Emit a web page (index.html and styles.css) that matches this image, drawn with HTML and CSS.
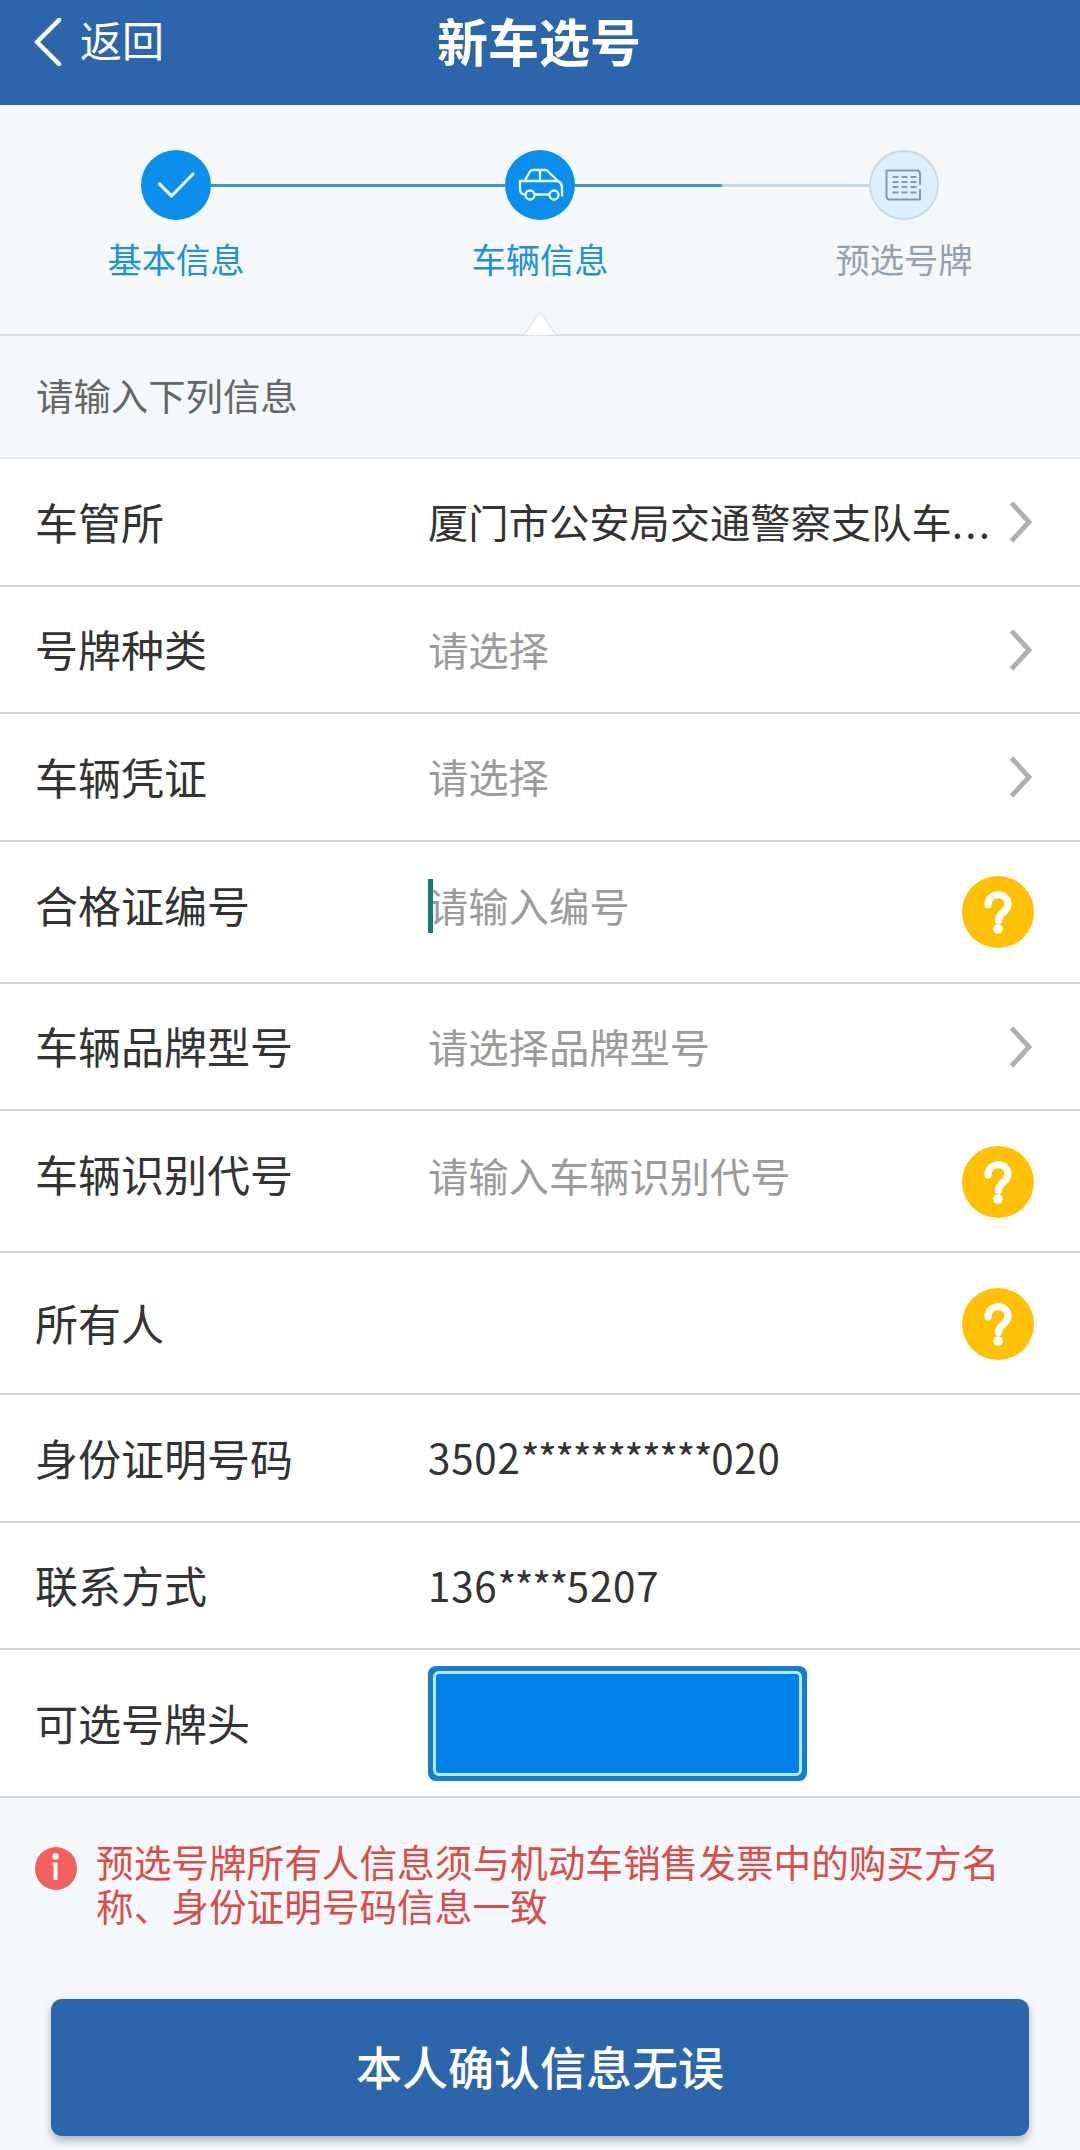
FILE: index.html
```html
<!doctype html>
<html lang="zh-CN">
  <head>
    <meta charset="UTF-8" />
    <meta name="viewport" content="width=device-width, initial-scale=1.0" />
    <title>新车选号</title>
    <link rel="stylesheet" href="styles.css">
  </head>
  <body>
    <header class="topbar">
      <a class="back">
        <svg width="28" height="48" viewBox="0 0 28 48"><path d="M25 2 3 24 25 46" /></svg>
        <span>返回</span>
      </a>
      <h1>新车选号</h1>
      <span></span>
    </header>

    <nav class="steps">
      <div class="step done">
        <div class="track">
          <span class="line none"></span>
          <span class="dot">
            <svg width="70" height="70" viewBox="0 0 70 70"><path d="M18.500 34 30.500 46 52 24" stroke-width="3.200" /></svg>
          </span>
          <span class="line"></span>
        </div>
        <div class="name">基本信息</div>
      </div>
      <div class="step done current">
        <div class="track">
          <span class="line"></span>
          <span class="dot">
            <svg width="70" height="70" viewBox="0 0 70 70" stroke-width="2.300">
              <path d="M19.500 31 25 21.500Q26 20 27.500 20H40Q41.500 20 42.500 21L53 31M35 20V31" />
              <path d="M20.500 45Q15 44 15 39V31H51Q57 31.500 57 38V45.500M30 44.500H44" />
              <circle cx="25" cy="45" r="4.500" />
              <circle cx="49" cy="45" r="4.500" />
            </svg>
          </span>
          <span class="line"></span>
        </div>
        <div class="name">车辆信息</div>
        <svg class="pointer" width="34" height="25" viewBox="0 0 34 25"><path d="M1 24 15 3Q17 1 19 3L33 24" /></svg>
      </div>
      <div class="step">
        <div class="track">
          <span class="line"></span>
          <span class="dot">
            <svg width="66" height="66" viewBox="0 0 66 66" stroke-width="2">
              <path d="M49 32V22Q49 18.500 46 18.500H15.500V44Q15.500 47.500 19 47.500H49V38" />
              <path d="M21.500 25H45.500M21.500 30H45.500M21.500 35H45.500M21.500 40.500H45.500" stroke-dasharray="6 3" stroke-linecap="butt" />
            </svg>
          </span>
          <span class="line none"></span>
        </div>
        <div class="name">预选号牌</div>
      </div>
    </nav>

    <p class="hint">请输入下列信息</p>

    <main class="form">
      <div class="row">
        <label>车管所</label>
        <span class="value">厦门市公安局交通警察支队车<span class="more">...</span></span>
        <svg class="chevron" viewBox="0 0 24 42"><path d="M2.500 2 20 21 2.500 40" /></svg>
      </div>
      <div class="row">
        <label>号牌种类</label>
        <span class="value empty">请选择</span>
        <svg class="chevron" viewBox="0 0 24 42"><path d="M2.500 2 20 21 2.500 40" /></svg>
      </div>
      <div class="row">
        <label>车辆凭证</label>
        <span class="value empty">请选择</span>
        <svg class="chevron" viewBox="0 0 24 42"><path d="M2.500 2 20 21 2.500 40" /></svg>
      </div>
      <div class="row tall top">
        <label>合格证编号</label>
        <span class="value empty focus">请输入编号</span>
        <svg class="help" viewBox="0 0 72 72">
          <circle cx="36" cy="36" r="36" />
          <path d="M26 29C26 15.500 46 15.500 46 28 46 36 36.500 36.500 36.500 44.500" />
          <circle class="point" cx="36" cy="53" r="4.800" />
        </svg>
      </div>
      <div class="row">
        <label>车辆品牌型号</label>
        <span class="value empty">请选择品牌型号</span>
        <svg class="chevron" viewBox="0 0 24 42"><path d="M2.500 2 20 21 2.500 40" /></svg>
      </div>
      <div class="row tall top">
        <label>车辆识别代号</label>
        <span class="value empty">请输入车辆识别代号</span>
        <svg class="help" viewBox="0 0 72 72">
          <circle cx="36" cy="36" r="36" />
          <path d="M26 29C26 15.500 46 15.500 46 28 46 36 36.500 36.500 36.500 44.500" />
          <circle class="point" cx="36" cy="53" r="4.800" />
        </svg>
      </div>
      <div class="row tall">
        <label>所有人</label>
        <span class="value"></span>
        <svg class="help" viewBox="0 0 72 72">
          <circle cx="36" cy="36" r="36" />
          <path d="M26 29C26 15.500 46 15.500 46 28 46 36 36.500 36.500 36.500 44.500" />
          <circle class="point" cx="36" cy="53" r="4.800" />
        </svg>
      </div>
      <div class="row">
        <label>身份证明号码</label>
        <span class="value number">3502<span class="mask">***********</span>020</span>
      </div>
      <div class="row">
        <label>联系方式</label>
        <span class="value number">136<span class="mask">****</span>5207</span>
      </div>
      <div class="row plates">
        <label>可选号牌头</label>
        <span class="plate"></span>
      </div>
    </main>

    <div class="notice">
      <svg width="42" height="43" viewBox="0 0 42 43">
        <ellipse cx="21" cy="21.500" rx="21" ry="21.500" />
        <circle class="white" cx="20.500" cy="9.500" r="3.200" />
        <path class="white" d="M17.500 15.500H22.500V33H18.500L18.500 17.500H17.500Z" />
      </svg>
      <p>预选号牌所有人信息须与机动车销售发票中的购买方名称、身份证明号码信息一致</p>
    </div>

    <button class="submit">本人确认信息无误</button>
  </body>
</html>
```

FILE: styles.css
```css
*,
*::before {
  box-sizing: border-box;
}
body {
  margin: 0;
  height: 2150px;
  overflow: hidden;
  display: flex;
  flex-direction: column;
  background: #f4f8fa;
  color: #333;
  font-family: "Noto Sans CJK SC", sans-serif;
}
svg {
  display: block;
  flex: none;
  fill: none;
  stroke-linecap: round;
  stroke-linejoin: round;
}

/* top bar */
.topbar {
  flex: none;
  height: 105px;
  padding: 0 36px 21px 34px;
  display: grid;
  grid-template-columns: 1fr auto 1fr;
  align-items: center;
  background: #2c65a9;
  color: #fff;
}
.back {
  display: flex;
  align-items: center;
  gap: 18px;
  font-size: 42px;
  line-height: 60px;
}
.back span {
  margin-top: -6px;
}
.back svg {
  stroke: #fff;
  stroke-width: 4.5;
}
h1 {
  margin: -4px 0 0;
  font-size: 51px;
  line-height: 64px;
  font-weight: 700;
}

/* progress */
.steps {
  flex: none;
  height: 231px;
  padding-top: 45px;
  display: flex;
  justify-content: center;
  border-bottom: 2px solid #dde1e4;
}
.step {
  position: relative;
  flex: none;
  width: 364px;
  text-align: center;
  color: #93a2b0;
}
.track {
  display: flex;
  align-items: center;
  height: 70px;
}
.line {
  flex: 1;
  height: 3px;
  background: #c6dae8;
}
.dot {
  width: 70px;
  height: 70px;
  border-radius: 50%;
  border: 2px solid #cbdce9;
  background: #ddeefd;
  stroke: #8598ac;
}
.done .line {
  background: #3f97cf;
}
.done .dot {
  border: none;
  background: #0b8fea;
  stroke: #e4fbff;
}
.track .line.none {
  background: none;
}
.name {
  margin-top: 13px;
  font-size: 34.3px;
  line-height: 50px;
}
.done .name {
  color: #2390d9;
}
.pointer {
  position: absolute;
  left: 165px;
  bottom: -2px;
  fill: #fff;
  stroke: #e4e7e9;
  stroke-width: 1.5;
}

.hint {
  flex: none;
  margin: 0;
  height: 123px;
  padding-left: 36px;
  line-height: 119px;
  font-size: 37.4px;
  color: #666;
  border-bottom: 2px solid #e8ecf1;
}

/* form */
.form {
  flex: none;
  background: #fff;
}
.row {
  height: 127.5px;
  padding: 1px 46px 0 35px;
  display: flex;
  align-items: center;
  border-bottom: 2px solid #d3d3d3;
}
.row.tall {
  height: 142px;
}
.row label {
  width: 393px;
  flex: none;
  margin-top: -3px;
  font-size: 43px;
  line-height: 60px;
}
.value {
  position: relative;
  flex: 1;
  margin-top: -2px;
  font-size: 40.3px;
  line-height: 60px;
  white-space: nowrap;
}
.more {
  letter-spacing: 2.3px;
}
.empty {
  color: #9b9b9b;
}
.top label {
  margin-top: -17px;
}
.top .value {
  margin-top: -14px;
}
.number {
  letter-spacing: 0.8px;
}
.mask {
  letter-spacing: -1.5px;
}
.focus::before {
  content: "";
  position: absolute;
  left: 0;
  top: 4px;
  width: 5px;
  height: 54px;
  background: #137f72;
}
.chevron {
  width: 24px;
  height: 42px;
  margin: 0 1px 0 auto;
  stroke: #b0b0b0;
  stroke-width: 4.8;
  stroke-linecap: butt;
  stroke-linejoin: miter;
}
.help {
  width: 72px;
  height: 72px;
  stroke: #fff;
  stroke-width: 7.2;
}
.help circle {
  fill: #fec107;
  stroke: none;
}
.help .point {
  fill: #fff;
}
.row.plates {
  height: 148px;
}
.plate {
  width: 379px;
  height: 115px;
  padding: 5px;
  border-radius: 8px;
  background: #187dcb;
}
.plate::before {
  content: "";
  display: block;
  height: 100%;
  border: 3px solid #b5ecff;
  border-radius: 6px;
  background: #0282e8;
}

/* notice and submit */
.notice {
  flex: none;
  display: flex;
  gap: 19px;
  padding: 41px 60px 0 35px;
}
.notice svg {
  margin-top: 8px;
  fill: #f0605f;
}
.notice .white {
  fill: #fff;
}
.notice p {
  margin: 0;
  width: 910px;
  font-size: 37.65px;
  line-height: 44px;
  color: #d94c4a;
}
.submit {
  flex: none;
  margin: 72px 51px 0;
  height: 137px;
  padding: 0 0 6px;
  border: none;
  border-radius: 11px;
  background: #2c65a9;
  box-shadow: 0 5px 9px rgba(40, 60, 80, 0.35);
  color: #fff;
  font-family: inherit;
  font-size: 46px;
  font-weight: 500;
}
```
